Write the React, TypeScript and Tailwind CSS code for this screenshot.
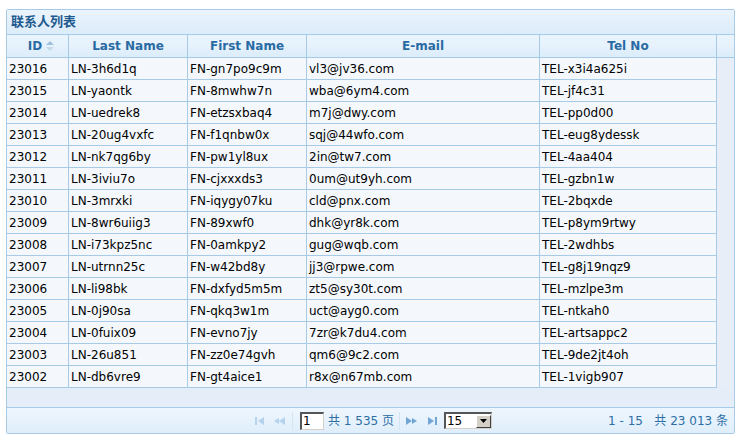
import React from "react";

const rows: [string, string, string, string, string][] = [
  ["23016", "LN-3h6d1q", "FN-gn7po9c9m", "vl3@jv36.com", "TEL-x3i4a625i"],
  ["23015", "LN-yaontk", "FN-8mwhw7n", "wba@6ym4.com", "TEL-jf4c31"],
  ["23014", "LN-uedrek8", "FN-etzsxbaq4", "m7j@dwy.com", "TEL-pp0d00"],
  ["23013", "LN-20ug4vxfc", "FN-f1qnbw0x", "sqj@44wfo.com", "TEL-eug8ydessk"],
  ["23012", "LN-nk7qg6by", "FN-pw1yl8ux", "2in@tw7.com", "TEL-4aa404"],
  ["23011", "LN-3iviu7o", "FN-cjxxxds3", "0um@ut9yh.com", "TEL-gzbn1w"],
  ["23010", "LN-3mrxki", "FN-iqygy07ku", "cld@pnx.com", "TEL-2bqxde"],
  ["23009", "LN-8wr6uiig3", "FN-89xwf0", "dhk@yr8k.com", "TEL-p8ym9rtwy"],
  ["23008", "LN-i73kpz5nc", "FN-0amkpy2", "gug@wqb.com", "TEL-2wdhbs"],
  ["23007", "LN-utrnn25c", "FN-w42bd8y", "jj3@rpwe.com", "TEL-g8j19nqz9"],
  ["23006", "LN-li98bk", "FN-dxfyd5m5m", "zt5@sy30t.com", "TEL-mzlpe3m"],
  ["23005", "LN-0j90sa", "FN-qkq3w1m", "uct@ayg0.com", "TEL-ntkah0"],
  ["23004", "LN-0fuix09", "FN-evno7jy", "7zr@k7du4.com", "TEL-artsappc2"],
  ["23003", "LN-26u851", "FN-zz0e74gvh", "qm6@9c2.com", "TEL-9de2jt4oh"],
  ["23002", "LN-db6vre9", "FN-gt4aice1", "r8x@n67mb.com", "TEL-1vigb907"],
];

const widths = ["w-[62px]", "w-[119px]", "w-[119px]", "w-[233px]", "w-[177px]"];

function First({ dim }: { dim?: boolean }) {
  return (
    <svg width="10" height="10" viewBox="0 0 10 10" className={dim ? "opacity-40" : ""}>
      <rect x="0" y="1" width="2" height="8" fill="#6fa6d6" />
      <polygon points="9,1 9,9 3,5" fill="#6fa6d6" />
    </svg>
  );
}
function Prev({ dim }: { dim?: boolean }) {
  return (
    <svg width="12" height="10" viewBox="0 0 12 10" className={dim ? "opacity-40" : ""}>
      <polygon points="6,2 6,8 1,5" fill="#6fa6d6" />
      <polygon points="12,1 12,9 6,5" fill="#6fa6d6" />
    </svg>
  );
}
function Next() {
  return (
    <svg width="12" height="10" viewBox="0 0 12 10">
      <polygon points="0,1 0,9 6,5" fill="#6fa6d6" />
      <polygon points="6,2 6,8 11,5" fill="#6fa6d6" />
    </svg>
  );
}
function Last() {
  return (
    <svg width="12" height="10" viewBox="0 0 12 10">
      <polygon points="1,1 1,9 7,5" fill="#6fa6d6" />
      <rect x="8" y="1" width="2" height="8" fill="#6fa6d6" />
    </svg>
  );
}

export default function App() {
  const font = { fontFamily: '"DejaVu Sans", Verdana, "Noto Sans CJK SC", sans-serif' };
  const cjk = { fontFamily: '"DejaVu Sans", "Noto Sans CJK SC", sans-serif' };
  return (
    <div className="w-[743px] h-[443px] bg-white pt-[9px] pl-[6px]" style={font}>
      <div className="w-[729px] border border-[#a7cbe6] rounded-[2px] overflow-hidden">
        {/* Title */}
        <div className="h-[25px] border-b border-[#a7cbe6] bg-gradient-to-b from-[#eaf4fd] to-[#dcecfa] flex items-center pl-[4px]">
          <span className="text-[13px] font-bold text-[#1f5a8e]" style={cjk}>联系人列表</span>
        </div>
        {/* Header */}
        <div className="flex h-[23px] border-b border-[#a7cbe6] bg-gradient-to-b from-[#eaf4fd] via-[#e6f2fc] to-[#dbecfa]">
          {["ID", "Last Name", "First Name", "E-mail", "Tel No"].map((h, i) => (
            <div key={h} className={`${widths[i]} shrink-0 border-r border-[#a7cbe6] flex items-center justify-center text-[12px] font-bold text-[#2a6aa3]`}>
              <span className={i === 0 ? "ml-[8px]" : ""}>{h}</span>
              {i === 0 && (
                <svg width="10" height="12" viewBox="0 0 10 12" className="ml-[3px]">
                  <polygon points="5,1 9,5 1,5" fill="#9cc0dd" />
                  <polygon points="1,7 9,7 5,11" fill="#c4d9ea" />
                </svg>
              )}
            </div>
          ))}
          <div className="flex-1" />
        </div>
        {/* Body */}
        <div className="flex bg-[#e4edf8]">
          <div className="w-[710px] shrink-0">
            {rows.map((r) => (
              <div key={r[0]} className="flex h-[22px] border-b border-[#a7cbe6] bg-[#f4f8fd]">
                {r.map((c, i) => (
                  <div key={i} className={`${widths[i]} shrink-0 border-r border-[#a7cbe6] flex items-center pl-[2px] text-[12px] text-black whitespace-nowrap overflow-hidden`}>
                    {c}
                  </div>
                ))}
              </div>
            ))}
          </div>
          <div className="flex-1 bg-[#e8eef7]" />
        </div>
        <div className="h-[20px] bg-[#e4edf8] border-b border-[#a7cbe6]" />
        {/* Pager */}
        <div className="h-[25px] bg-gradient-to-b from-[#eef6fe] to-[#dfeefb] flex items-center text-[12px] text-[#2d6ea6]">
          <div className="flex items-center ml-[248px]">
            <First dim />
            <div className="w-[8px]" />
            <Prev dim />
            <div className="w-[1px] h-[18px] bg-[#d6e4f0] ml-[7px] mr-[7px]" />
            <div className="w-[24px] h-[18px] bg-white border-t-2 border-l-2 border-[#555] border-r border-b border-r-[#d4d0c8] border-b-[#d4d0c8] text-black text-[12px] leading-[14px] pl-[1px]">1</div>
            <span className="ml-[4px] whitespace-nowrap" style={cjk}>共 1 535 页</span>
            <div className="w-[1px] h-[18px] bg-[#d6e4f0] ml-[5px] mr-[6px]" />
            <Next />
            <div className="w-[9px]" />
            <Last />
            <div className="ml-[5px] w-[48px] h-[17px] bg-white border-t-2 border-l-2 border-[#555] border-r border-b border-r-[#d4d0c8] border-b-[#d4d0c8] flex items-center text-black text-[12px]">
              <span className="flex-1 pl-[1px] leading-[13px]">15</span>
              <div className="w-[15px] h-[13px] bg-[#d4d0c8] border-t border-l border-white border-r border-b border-r-[#404040] border-b-[#404040] flex items-center justify-center">
                <svg width="7" height="4" viewBox="0 0 7 4"><polygon points="0,0 7,0 3.5,4" fill="#000" /></svg>
              </div>
            </div>
          </div>
          <span className="ml-auto mr-[6px] whitespace-nowrap" style={cjk}>1 - 15&nbsp;&nbsp;&nbsp;共 23 013 条</span>
        </div>
      </div>
    </div>
  );
}
